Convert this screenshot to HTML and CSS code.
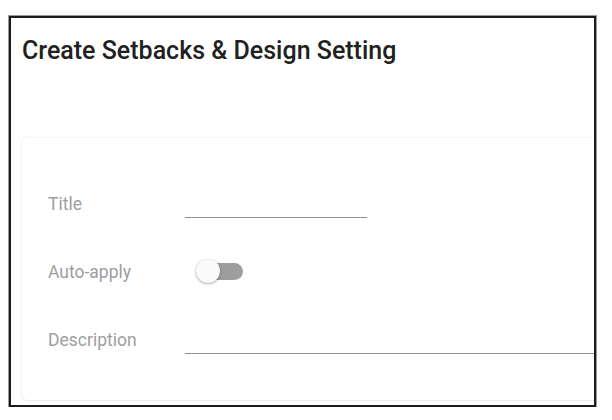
FILE: index.html
```html
<!DOCTYPE html>
<html>
<head>
<meta charset="utf-8">
<link rel="stylesheet" href="styles.css">
</head>
<body>
<div class="frame">
  <h1 class="title">Create Setbacks &amp; Design Setting</h1>
  <div class="card">
    <div class="row">
      <div class="label">Title</div>
      <div class="field field-short"></div>
    </div>
    <div class="row">
      <div class="label">Auto-apply</div>
      <div class="toggle"><span class="track"></span><span class="thumb"></span></div>
    </div>
    <div class="row">
      <div class="label">Description</div>
      <div class="field field-long"></div>
    </div>
  </div>
</div>
</body>
</html>
```

FILE: styles.css
```css
html, body {
  margin: 0;
  padding: 0;
  background: #ffffff;
  font-family: Roboto, "Liberation Sans", sans-serif;
}
.frame {
  box-sizing: border-box;
  margin: 16px 0 0 9px;
  width: 587px;
  height: 391px;
  border: 2px solid #1c1c1c;
  box-shadow: 0 0 0 1px #9a9a9a;
  overflow: hidden;
  padding: 0 0 0 11px;
  background: #fff;
}
.title {
  margin: 0;
  padding-top: 18px;
  height: 120px;
  box-sizing: border-box;
  font-size: 25px;
  line-height: 30px;
  font-weight: 500;
  color: #212121;
  letter-spacing: 0;
}
.card {
  width: 640px;
  margin-top: 0;
  padding: 32px 0 26px 26px;
  box-sizing: border-box;
  border-radius: 5px;
  background: #fff;
  box-shadow: 0 0 3px rgba(0,0,0,0.10), 0 1px 2px rgba(0,0,0,0.05);
}
.row {
  display: flex;
  align-items: center;
  height: 68px;
}
.label {
  width: 137px;
  flex: none;
  font-size: 17.5px;
  color: #9e9e9e;
}
.field {
  height: 27px;
  box-sizing: border-box;
  border-bottom: 1px solid #8f8f8f;
}
.field-short {
  width: 182px;
}
.field-long {
  flex: 1;
  margin-top: 1px;
}
.toggle {
  position: relative;
  width: 48px;
  height: 26px;
  margin-left: 11px;
}
.track {
  position: absolute;
  left: 5px;
  top: 4px;
  width: 42px;
  height: 17px;
  border-radius: 9px;
  background: #9e9e9e;
}
.thumb {
  position: absolute;
  left: 0;
  top: 0;
  width: 24px;
  height: 24px;
  border-radius: 50%;
  background: #fafafa;
  box-shadow: 0 1px 3px rgba(0,0,0,0.3), 0 0 1px rgba(0,0,0,0.2);
}
```
